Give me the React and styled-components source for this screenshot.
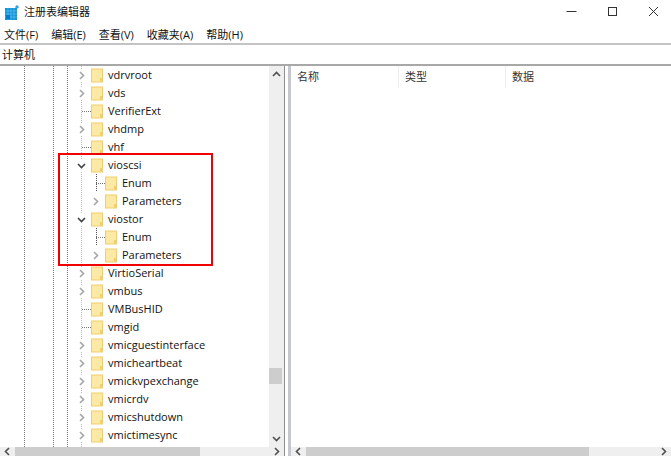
import { createGlobalStyle, styled } from "styled-components";

const UI_FONT = `"Open Sans", "Noto Sans CJK SC", sans-serif`;

const GlobalStyle = createGlobalStyle`
    html, body {
        margin: 0;
        padding: 0;
        background: #fff;
    }
`;

const AppWindow = styled.div`
    width: 671px;
    height: 456px;
    display: flex;
    flex-direction: column;
    overflow: hidden;
    position: relative;
    background: #fff;
    color: #1a1a1a;
    font-family: ${UI_FONT};
    font-size: 11px;
`;

const TitleBar = styled.div`
    height: 25px;
    display: flex;
    align-items: center;
    padding-left: 5px;
    gap: 4px;
    margin-right: -1px;
`;

const TitleText = styled.span`
    flex: 1;
    font-size: 11px;
    line-height: 23px;
    padding-bottom: 2px;
    color: #111;
`;

const WindowButton = styled.div`
    width: 37px;
    height: 25px;
    padding-bottom: 3px;
    box-sizing: border-box;
    display: flex;
    align-items: center;
    justify-content: center;
`;

const MenuBar = styled.div`
    height: 18px;
    display: flex;
    align-items: center;
    gap: 13px;
    padding-left: 4px;
    font-size: 11px;
    color: #111;
`;

const AddressBar = styled.div`
    height: 17px;
    padding: 0 0 2px 2px;
    border-top: 2px solid #c4c4c4;
    border-bottom: 2px solid #a8a8a8;
    display: flex;
    align-items: center;
    font-size: 11px;
    color: #111;
`;

const Panes = styled.div`
    flex: 1;
    min-height: 0;
    display: flex;
`;

const TreePane = styled.div`
    width: 284px;
    flex: none;
    display: flex;
    flex-direction: column;
    border-right: 1px solid #8f8f8f;
`;

const TreeBody = styled.div`
    flex: 1;
    min-height: 0;
    display: flex;
`;

const Tree = styled.div`
    flex: 1;
    min-width: 0;
    overflow: hidden;
    background-image:
        repeating-linear-gradient(#777 0 1px, transparent 1px 2px),
        repeating-linear-gradient(#777 0 1px, transparent 1px 2px),
        repeating-linear-gradient(#777 0 1px, transparent 1px 2px),
        repeating-linear-gradient(#bbb 0 1px, transparent 1px 2px);
    background-size: 1px 100%;
    background-repeat: no-repeat;
    background-position: 24px 0, 53px 0, 67px 0, 81px 0;
`;

const Row = styled.div`
    height: 18px;
    display: flex;
    align-items: center;
    padding-left: ${(props) => (props.$child ? 91 : 77)}px;
    font-size: 11px;
    line-height: 18px;
    white-space: nowrap;
    color: #111;
`;

const Expander = styled.div`
    width: 9px;
    height: ${(props) => (props.$guide ? 18 : 11)}px;
    flex: none;
    display: flex;
    align-items: center;
    justify-content: center;
    background-color: ${(props) => (props.$leaf ? "transparent" : "#fff")};
    background-image: ${(props) =>
        props.$guide
            ? "repeating-linear-gradient(#555 0 1px, transparent 1px 2px)"
            : "none"};
    background-size: 1px 100%;
    background-repeat: no-repeat;
    background-position: 5px 0;
`;

const LeafLine = styled.div`
    width: 9px;
    height: 1px;
    margin-left: 5px;
    margin-right: -5px;
    flex: none;
    background-image: repeating-linear-gradient(90deg, #777 0 1px, transparent 1px 2px);
`;

const RowFolder = styled.svg`
    width: 12px;
    height: 15px;
    flex: none;
    margin-left: 5px;
    margin-right: 5px;
`;

const VScroll = styled.div`
    width: 15px;
    flex: none;
    display: flex;
    flex-direction: column;
    background: #efefef;
`;

const VArrow = styled.div`
    height: 17px;
    display: flex;
    align-items: center;
    justify-content: center;
    flex: none;
`;

const VTrack = styled.div`
    flex: 1;
    padding-top: 285px;
`;

const VThumb = styled.div`
    height: 16px;
    width: 13px;
    background: #cdcdcd;
`;

const HScroll = styled.div`
    height: 9px;
    flex: none;
    display: flex;
    align-items: center;
    background: #efefef;
    overflow: hidden;
`;

const HArrow = styled.div`
    width: 15px;
    height: 9px;
    flex: none;
    display: flex;
    align-items: center;
    justify-content: center;
`;

const HThumb = styled.div`
    width: ${(props) => props.$width}px;
    height: 9px;
    flex: none;
    background: #cdcdcd;
`;

const HSpace = styled.div`
    flex: 1;
`;

const Splitter = styled.div`
    width: 6px;
    flex: none;
    display: flex;
    justify-content: flex-end;
`;

const SplitterEdge = styled.div`
    width: 3px;
    background: #c6c6ce;
`;

const ListPane = styled.div`
    flex: 1;
    min-width: 0;
    display: flex;
    flex-direction: column;
`;

const ListHeader = styled.div`
    flex: 1;
    display: flex;
    align-items: flex-start;
`;

const Column = styled.div`
    width: ${(props) => props.$width}px;
    height: 22px;
    flex: none;
    display: flex;
    align-items: center;
    padding: 0 0 2px 6px;
    box-sizing: border-box;
    border-right: ${(props) => (props.$last ? "none" : "1px solid #eeeeee")};
    font-size: 11px;
    color: #333;
`;

const Highlight = styled.div`
    position: absolute;
    left: 58px;
    top: 153px;
    width: 155px;
    height: 113px;
    box-sizing: border-box;
    border: 2px solid #f00000;
    pointer-events: none;
`;

const rows = [
    { name: "vdrvroot", kind: "closed" },
    { name: "vds", kind: "closed" },
    { name: "VerifierExt", kind: "leaf" },
    { name: "vhdmp", kind: "closed" },
    { name: "vhf", kind: "leaf" },
    { name: "vioscsi", kind: "open" },
    { name: "Enum", kind: "leaf", child: true },
    { name: "Parameters", kind: "closed", child: true },
    { name: "viostor", kind: "open" },
    { name: "Enum", kind: "leaf", child: true },
    { name: "Parameters", kind: "closed", child: true },
    { name: "VirtioSerial", kind: "closed" },
    { name: "vmbus", kind: "closed" },
    { name: "VMBusHID", kind: "leaf" },
    { name: "vmgid", kind: "leaf" },
    { name: "vmicguestinterface", kind: "closed" },
    { name: "vmicheartbeat", kind: "closed" },
    { name: "vmickvpexchange", kind: "closed" },
    { name: "vmicrdv", kind: "closed" },
    { name: "vmicshutdown", kind: "closed" },
    { name: "vmictimesync", kind: "closed" },
];

const menus = ["文件(F)", "编辑(E)", "查看(V)", "收藏夹(A)", "帮助(H)"];

function AppIcon() {
    return (
        <svg width="15" height="15" viewBox="0 0 15 15">
            <rect x="0" y="3" width="12" height="12" fill="#1191d8" />
            <path d="M3 3v12M6 3v12M9 3v12M0 6h12M0 9h12M0 12h12" stroke="#5fc0f0" strokeWidth="0.7" />
            <rect x="1" y="10" width="4" height="4" fill="#0b79c4" />
            <rect x="10.5" y="0.5" width="3" height="3" fill="#3aa3e3" transform="rotate(45 12 2)" />
        </svg>
    );
}

function Chevron({ dir, color = "#a6a6a6", size = 9, width = 1.6 }) {
    const paths = {
        right: "M3 1l3.5 3.5L3 8",
        left: "M6 1L2.5 4.5 6 8",
        down: "M1 3l3.5 3.5L8 3",
        up: "M1 6l3.5-3.5L8 6",
    };
    return (
        <svg width={size} height={size} viewBox="0 0 9 9">
            <path d={paths[dir]} fill="none" stroke={color} strokeWidth={width} />
        </svg>
    );
}

function Folder() {
    return (
        <RowFolder viewBox="0 0 12 15">
            <rect x="0.5" y="1" width="11" height="13" fill="#fde9a6" stroke="#f1cd6d" />
            <rect x="9" y="10" width="2" height="3.5" fill="#f1cd6d" />
        </RowFolder>
    );
}

function TreeRow({ name, kind, child }) {
    return (
        <Row $child={child}>
            {kind === "leaf" ? (
                <Expander $leaf $guide={child}>
                    <LeafLine />
                </Expander>
            ) : (
                <Expander>
                    {kind === "open" ? (
                        <Chevron dir="down" color="#404040" />
                    ) : (
                        <Chevron dir="right" />
                    )}
                </Expander>
            )}
            <Folder />
            <span>{name}</span>
        </Row>
    );
}

function App() {
    return (
        <AppWindow>
            <GlobalStyle />
            <TitleBar>
                <AppIcon />
                <TitleText>注册表编辑器</TitleText>
                <WindowButton>
                    <svg width="11" height="11" viewBox="0 0 11 11">
                        <path d="M0.5 5.5h10" stroke="#333" strokeWidth="1" />
                    </svg>
                </WindowButton>
                <WindowButton>
                    <svg width="11" height="11" viewBox="0 0 11 11">
                        <rect x="1.5" y="1.5" width="8" height="8" fill="none" stroke="#333" />
                    </svg>
                </WindowButton>
                <WindowButton>
                    <svg width="11" height="11" viewBox="0 0 11 11">
                        <path d="M1 1l9 9M10 1l-9 9" stroke="#333" />
                    </svg>
                </WindowButton>
            </TitleBar>
            <MenuBar>
                {menus.map((item) => (
                    <span key={item}>{item}</span>
                ))}
            </MenuBar>
            <AddressBar>计算机</AddressBar>
            <Panes>
                <TreePane>
                    <TreeBody>
                        <Tree>
                            {rows.map((row, index) => (
                                <TreeRow key={index} {...row} />
                            ))}
                        </Tree>
                        <VScroll>
                            <VArrow>
                                <Chevron dir="up" color="#505050" />
                            </VArrow>
                            <VTrack>
                                <VThumb />
                            </VTrack>
                            <VArrow>
                                <Chevron dir="down" color="#505050" />
                            </VArrow>
                        </VScroll>
                    </TreeBody>
                    <HScroll>
                        <HArrow>
                            <Chevron dir="left" color="#505050" />
                        </HArrow>
                        <HThumb $width={185} />
                        <HSpace />
                        <HArrow>
                            <Chevron dir="right" color="#505050" />
                        </HArrow>
                    </HScroll>
                </TreePane>
                <Splitter>
                    <SplitterEdge />
                </Splitter>
                <ListPane>
                    <ListHeader>
                        <Column $width={108}>名称</Column>
                        <Column $width={107}>类型</Column>
                        <Column $width={120} $last>
                            数据
                        </Column>
                    </ListHeader>
                    <HScroll>
                        <HArrow>
                            <Chevron dir="left" color="#505050" />
                        </HArrow>
                        <HThumb $width={283} />
                        <HSpace />
                        <HArrow>
                            <Chevron dir="right" color="#505050" />
                        </HArrow>
                    </HScroll>
                </ListPane>
            </Panes>
            <Highlight />
        </AppWindow>
    );
}

export default App;
